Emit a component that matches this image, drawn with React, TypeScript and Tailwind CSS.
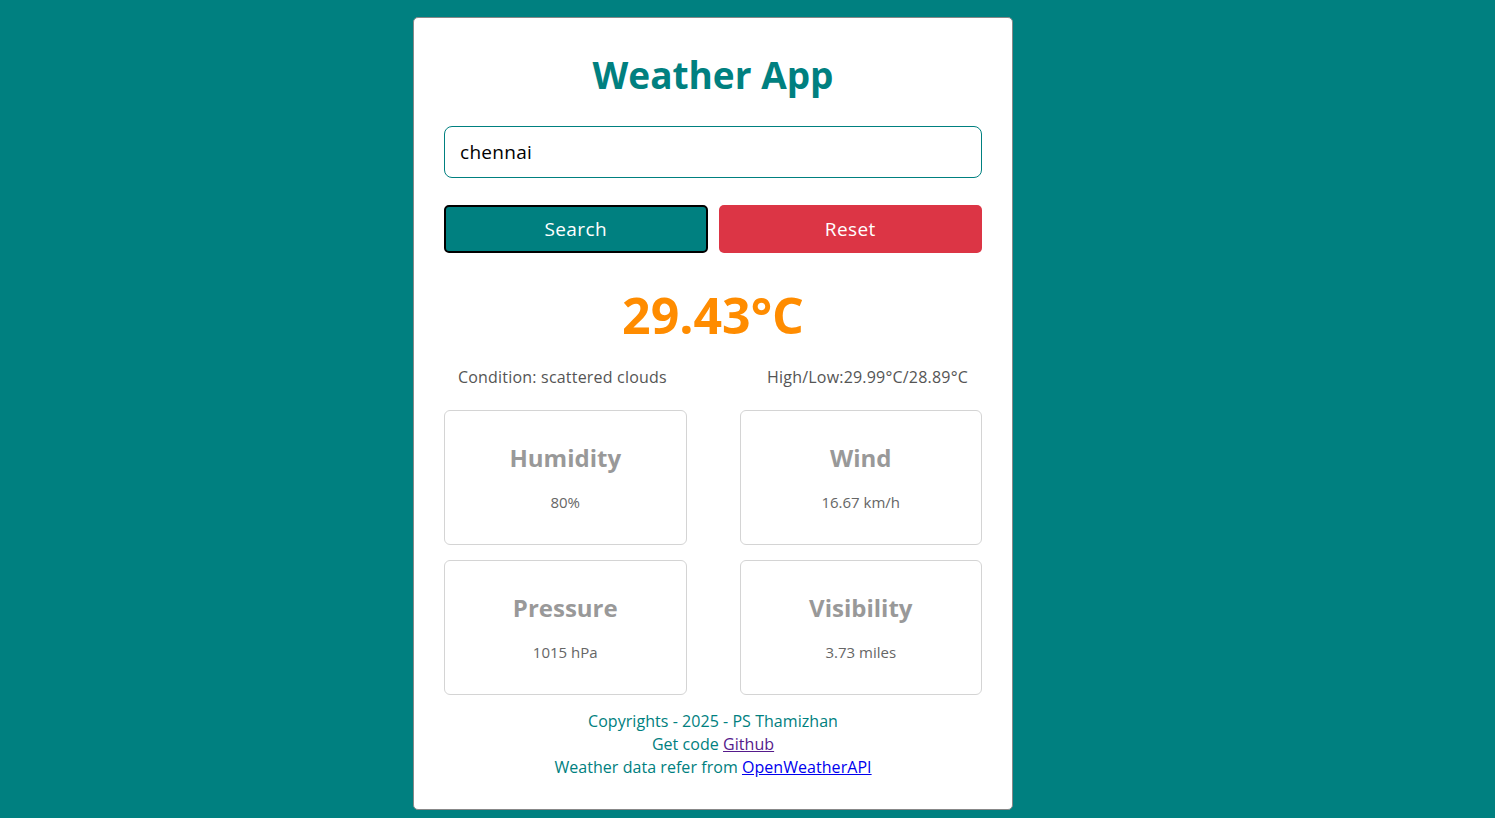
import React from "react";

const stats = [
  { label: "Humidity", value: "80%" },
  { label: "Wind", value: "16.67 km/h" },
  { label: "Pressure", value: "1015 hPa" },
  { label: "Visibility", value: "3.73 miles" },
];

const App = () => {
  return (
    <div className="min-h-screen bg-[#008080] pt-[17px] pb-[9px] pr-[69px] font-['Open_Sans',sans-serif]">
      <div className="mx-auto w-[600px] bg-white border border-[#888] rounded-[5px] px-[30px] pt-[30px] pb-[30px]">
        <h1 className="text-center text-[37px] leading-[53px] font-bold text-[#008080]">Weather App</h1>

        <input
          type="text"
          defaultValue="chennai"
          className="mt-[25px] block w-full h-[52px] border border-[#008080] rounded-[8px] px-[15px] text-[19px] tracking-[0.3px] text-black outline-none"
        />

        <div className="mt-[27px] grid grid-cols-2 gap-[11px]">
          <button className="h-[48px] bg-[#008080] text-white text-[19px] tracking-[0.4px] rounded-[5px] border-2 border-black">
            Search
          </button>
          <button className="h-[48px] bg-[#dc3545] text-white text-[19px] tracking-[0.4px] rounded-[5px]">
            Reset
          </button>
        </div>

        <div className="mt-[26px] text-center text-[50px] leading-[72px] font-bold text-[#ff8c00]">29.43°C</div>

        <div className="mt-[15px] flex justify-between px-[14px] text-[16px] tracking-[0.2px] leading-[22px] text-[#555]">
          <span>Condition: scattered clouds</span>
          <span>High/Low:29.99°C/28.89°C</span>
        </div>

        <div className="mt-[22px] grid grid-cols-2 gap-x-[53px] gap-y-[15px]">
          {stats.map((s) => (
            <div key={s.label} className="h-[135px] border border-[#d4d4d4] rounded-[6px] pt-[29px] text-center">
              <h3 className="text-[24px] leading-[36px] font-bold text-[#999]">{s.label}</h3>
              <p className="mt-[15px] text-[15px] leading-[22px] text-[#666]">{s.value}</p>
            </div>
          ))}
        </div>

        <div className="mt-[15px] text-center text-[16px] tracking-[0.05px] leading-[23px] text-[#008080]">
          <p>Copyrights - 2025 - PS Thamizhan</p>
          <p>
            Get code <a href="#" className="underline text-[#551a8b]">Github</a>
          </p>
          <p>
            Weather data refer from <a href="#" className="underline text-[#0000ee]">OpenWeatherAPI</a>
          </p>
        </div>
      </div>
    </div>
  );
};

export default App;
